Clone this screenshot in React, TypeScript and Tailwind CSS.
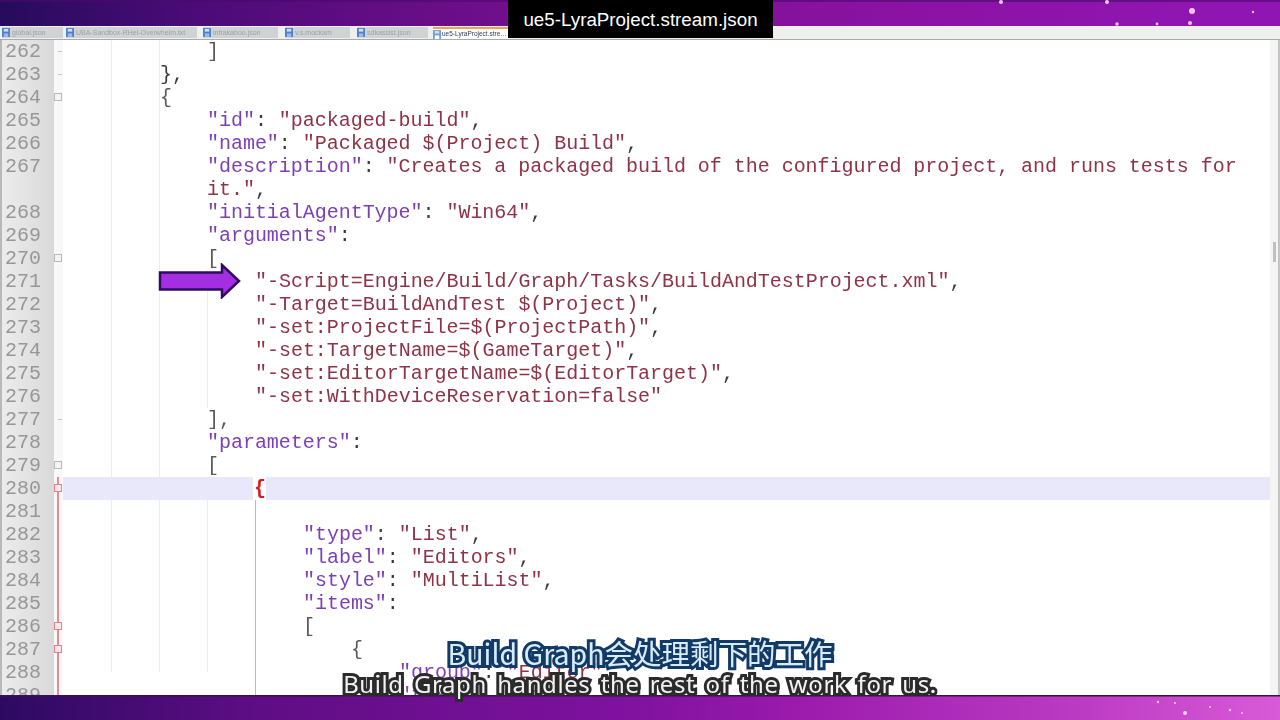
import React from "react";

type Tok = [string, string];
const K = "text-[#7d3fb5]";
const S = "text-[#8f3347]";
const P = "text-[#3a3a3a]";
const B = "text-[#5a5a5a]";

type Row = {
  n?: number;
  indent: number;
  toks: Tok[];
  fold?: "box" | "tick" | "redbox" | "redline" | "none";
  red?: boolean;
  hl?: boolean;
  noGuides?: boolean;
  shortGuides?: boolean;
  extra?: boolean;
};

const kv = (k: string, v: string, tail = ","): Tok[] => [
  [`"${k}"`, K],
  [": ", P],
  [`"${v}"`, S],
  [tail, P],
];

const rows: Row[] = [
  { n: 262, indent: 12, toks: [["]", B]], fold: "tick" },
  { n: 263, indent: 8, toks: [["},", P]], fold: "tick", extra: true },
  { n: 264, indent: 8, toks: [["{", B]], fold: "box", extra: true },
  { n: 265, indent: 12, toks: kv("id", "packaged-build") },
  { n: 266, indent: 12, toks: kv("name", "Packaged $(Project) Build") },
  {
    n: 267,
    indent: 12,
    toks: [
      ['"description"', K],
      [": ", P],
      ['"Creates a packaged build of the configured project, and runs tests for', S],
    ],
  },
  { indent: 12, toks: [['it."', S], [",", P]] },
  { n: 268, indent: 12, toks: kv("initialAgentType", "Win64") },
  { n: 269, indent: 12, toks: [['"arguments"', K], [":", P]] },
  { n: 270, indent: 12, toks: [["[", B]], fold: "box" },
  { n: 271, indent: 16, toks: [['"-Script=Engine/Build/Graph/Tasks/BuildAndTestProject.xml"', S], [",", P]] },
  { n: 272, indent: 16, toks: [['"-Target=BuildAndTest $(Project)"', S], [",", P]] },
  { n: 273, indent: 16, toks: [['"-set:ProjectFile=$(ProjectPath)"', S], [",", P]] },
  { n: 274, indent: 16, toks: [['"-set:TargetName=$(GameTarget)"', S], [",", P]] },
  { n: 275, indent: 16, toks: [['"-set:EditorTargetName=$(EditorTarget)"', S], [",", P]] },
  { n: 276, indent: 16, toks: [['"-set:WithDeviceReservation=false"', S]] },
  { n: 277, indent: 12, toks: [["],", B]], fold: "tick" },
  { n: 278, indent: 12, toks: [['"parameters"', K], [":", P]] },
  { n: 279, indent: 12, toks: [["[", B]], fold: "box" },
  { n: 280, indent: 16, toks: [], fold: "redbox", hl: true },
  { n: 281, indent: 20, toks: [], fold: "redline", red: true },
  { n: 282, indent: 20, toks: kv("type", "List"), fold: "redline", red: true },
  { n: 283, indent: 20, toks: kv("label", "Editors"), fold: "redline", red: true },
  { n: 284, indent: 20, toks: kv("style", "MultiList"), fold: "redline", red: true },
  { n: 285, indent: 20, toks: [['"items"', K], [":", P]], fold: "redline", red: true },
  { n: 286, indent: 20, toks: [["[", B]], fold: "redbox", red: true },
  { n: 287, indent: 24, toks: [["{", B]], fold: "redbox", red: true },
  { n: 288, indent: 28, toks: kv("group", "Editor"), fold: "redline", red: true, shortGuides: true },
  { n: 289, indent: 28, toks: kv("text", "Game"), fold: "redline", red: true, noGuides: true },
];

function Fold({ kind }: { kind?: Row["fold"] }) {
  return (
    <div className="relative w-[9px] shrink-0 bg-[#f8f8f8]">
      {(kind === "redline" || kind === "redbox") && <div className="ml-[3px] h-full w-[2px] bg-[#ec8a94]" />}
      {kind === "tick" && <div className="absolute left-[4px] top-[11px] h-px w-[4px] bg-[#c4c4c4]" />}
      {kind === "box" && (
        <div className="absolute left-[0px] top-[7px] h-[8px] w-[8px] border border-[#b8b8b8] bg-[#f4f4f4]" />
      )}
      {kind === "redbox" && (
        <div className="absolute left-[0px] top-[7px] h-[8px] w-[8px] border border-[#e8808c] bg-[#fbe8ea]" />
      )}
    </div>
  );
}

function Guides({ row }: { row: Row }) {
  const count = Math.floor(row.indent / 4);
  const cells = [];
  for (let i = 0; i < count; i++) {
    const isRedGuide = i === 4 && row.red;
    const hide = (row.noGuides && !isRedGuide) || i > 4;
    let cls = "w-[48px] shrink-0";
    if (i > 0 && !hide) {
      if (isRedGuide) cls += " border-l border-[#e7a9b0]";
      else if (row.shortGuides) cls += " h-[11px] border-l border-[#ececec]";
      else cls += " border-l border-[#ececec]";
    }
    cells.push(<span key={i} className={cls} />);
  }
  return <>{cells}</>;
}

function CodeRow({ row }: { row: Row }) {
  return (
    <div className="flex h-[23px] shrink-0">
      <div className="w-[54px] shrink-0 border-l-2 border-[#b9b9b9] bg-gradient-to-r from-[#ececec] to-[#d9d9d9] pl-[3px] text-[#979797]">
        {row.n ?? ""}
      </div>
      <Fold kind={row.fold} />
      {row.hl ? (
        <div className="flex min-w-0 flex-1">
          <div className="w-[190px] shrink-0 bg-[#e8e8fa]" />
          <div className="w-[13px] shrink-0 pl-[1px] font-bold text-[#d01f24]">{"{"}</div>
          <div className="flex-1 bg-[#e8e8fa]" />
        </div>
      ) : (
        <div className="flex min-w-0 flex-1 whitespace-pre">
          <Guides row={row} />
          <span className={row.extra ? "border-l border-[#ececec]" : ""}>
            {row.toks.map(([t, c], i) => (
              <span key={i} className={c}>
                {t}
              </span>
            ))}
          </span>
        </div>
      )}
    </div>
  );
}

const tabs = [
  { label: "global.json", w: "w-[64px] pr-[3px]" },
  { label: "UBA-Sandbox-RHel-Overwhelm.txt", w: "w-[137px] pr-[6px]" },
  { label: "infrakaboo.json", w: "w-[82px] pr-[7px]" },
  { label: "v.s.mockam", w: "w-[72px] pr-[7px]" },
  { label: "sdkassist.json", w: "w-[76px] pr-[5px]" },
];

function Floppy({ active }: { active?: boolean }) {
  return (
    <svg width="8" height="9" viewBox="0 0 9 10" className="shrink-0">
      <rect x="0" y="0" width="9" height="10" fill={active ? "#6d9ede" : "#4f7fd0"} />
      <rect x="2" y="1" width="5" height="3" fill="#cfe0f5" />
      <rect x="2" y="6" width="5" height="4" fill={active ? "#ffffff" : "#9ab9e4"} />
    </svg>
  );
}

const topStars = [
  [1192, 11, 3],
  [1001, 2, 2],
  [1107, 2, 2],
  [1253, 12, 1.2],
  [1117, 24, 1.8],
  [1157, 24, 1.4],
  [1190, 23, 2],
];
const bottomStars = [
  [1158, 7, 1.2],
  [1175, 8, 1],
  [1185, 18, 2],
  [1210, 12, 1],
  [1230, 15, 1.2],
  [1242, 18, 1],
];

const subtitleBlue =
  "text-[#d9ecfb] [-webkit-text-stroke:6px_#123a66] [paint-order:stroke_fill]";
const subtitleDark =
  "text-[#f2f2f2] [-webkit-text-stroke:6px_#2b2b2b] [paint-order:stroke_fill]";

export default function App() {
  return (
    <div className="relative flex h-[720px] w-[1280px] flex-col overflow-hidden bg-white font-['Liberation_Mono',monospace] text-[20px] leading-[23px] tracking-[-0.03px]">
      {/* top wallpaper strip */}
      <svg width="1280" height="26" className="block h-[26px] w-full shrink-0">
        <defs>
          <linearGradient id="top" x1="0" x2="1" y1="0" y2="0">
            <stop offset="0" stopColor="#260b5c" />
            <stop offset="0.15" stopColor="#4b0b78" />
            <stop offset="0.45" stopColor="#7a0f90" />
            <stop offset="0.7" stopColor="#8a13a4" />
            <stop offset="1" stopColor="#9016b4" />
          </linearGradient>
        </defs>
        <rect width="1280" height="26" fill="url(#top)" />
        <rect width="1280" height="2" fill="#4a0a6a" opacity="0.6" />
        {topStars.map(([x, y, r], i) => (
          <circle key={i} cx={x} cy={y} r={r} fill="#f6c6f6" />
        ))}
      </svg>

      {/* tab bar */}
      <div className="flex h-[13px] shrink-0 items-end overflow-hidden bg-[#eef0ee] pl-[2px] pt-[1px] font-['Liberation_Sans',sans-serif] text-[7px] leading-[12px] tracking-normal text-[#9aa0a6]">
        {tabs.map((t) => (
          <div key={t.label} className={`h-full shrink-0 ${t.w}`}>
            <div className="flex h-[11px] items-center gap-[2px] bg-[#d0d3d3] blur-[0.6px]">
              <Floppy />
              <span className="truncate">{t.label}</span>
            </div>
          </div>
        ))}
        <div className="flex h-[12px] w-[76px] shrink-0 items-center gap-[1px] border-t-2 border-[#f0a050] bg-white text-[#333a55] blur-[0.3px]">
          <Floppy active />
          <span className="truncate text-[6.5px]">ue5-LyraProject.stream.json</span>
        </div>
      </div>

      {/* editor */}
      <div className="flex min-h-0 flex-1 border-t border-[#a9a9a9]">
        <div className="flex min-w-0 flex-1 flex-col overflow-hidden blur-[0.45px]">
          {rows.map((r, i) => (
            <CodeRow key={i} row={r} />
          ))}
        </div>
        <div className="w-[10px] shrink-0 border-r-2 border-[#c4c4c4] bg-[#f4f4f4]">
          <div className="ml-[3px] mt-[202px] h-[20px] w-[3px] bg-[#c0c0c0]" />
        </div>
      </div>

      {/* bottom wallpaper strip */}
      <svg width="1280" height="25" className="block h-[25px] w-full shrink-0">
        <defs>
          <linearGradient id="bot" x1="0" x2="1" y1="0" y2="0">
            <stop offset="0" stopColor="#2c0a62" />
            <stop offset="0.2" stopColor="#5e0d84" />
            <stop offset="0.5" stopColor="#8012a0" />
            <stop offset="0.62" stopColor="#9a1aac" />
            <stop offset="0.85" stopColor="#bd3cc4" />
            <stop offset="1" stopColor="#d95ad8" />
          </linearGradient>
        </defs>
        <rect width="1280" height="25" fill="url(#bot)" />
        <rect width="1280" height="1.5" fill="#3a1050" />
        {bottomStars.map(([x, y, r], i) => (
          <circle key={i} cx={x} cy={y} r={r} fill="#f9d8f9" />
        ))}
      </svg>

      {/* overlays */}
      <div className="absolute left-[508px] top-0 flex h-[38px] w-[265px] items-center justify-center bg-black font-['Liberation_Sans',sans-serif] text-[18.8px] tracking-normal text-white">
        ue5-LyraProject.stream.json
      </div>

      <svg width="84" height="36" viewBox="0 0 84 36" className="absolute left-[158px] top-[263px]">
        <path d="M2 9.5H64V2L81 18L64 34V26.5H2Z" fill="#a32fe0" stroke="#2f0b63" strokeWidth="2.5" />
      </svg>

      <div className="absolute left-0 right-0 top-[635px] text-center font-['Noto_Sans_CJK_SC',sans-serif] text-[28.5px] leading-[36px] tracking-normal blur-[0.3px]">
        <span className={subtitleBlue}>Build Graph会处理剩下的工作</span>
      </div>
      <div className="absolute left-0 right-0 top-[668px] text-center font-['Noto_Sans',sans-serif] text-[24px] leading-[32px] tracking-[0.6px] blur-[0.3px] [word-spacing:3.4px]">
        <span className={subtitleDark}>Build Graph handles the rest of the work for us.</span>
      </div>
    </div>
  );
}
